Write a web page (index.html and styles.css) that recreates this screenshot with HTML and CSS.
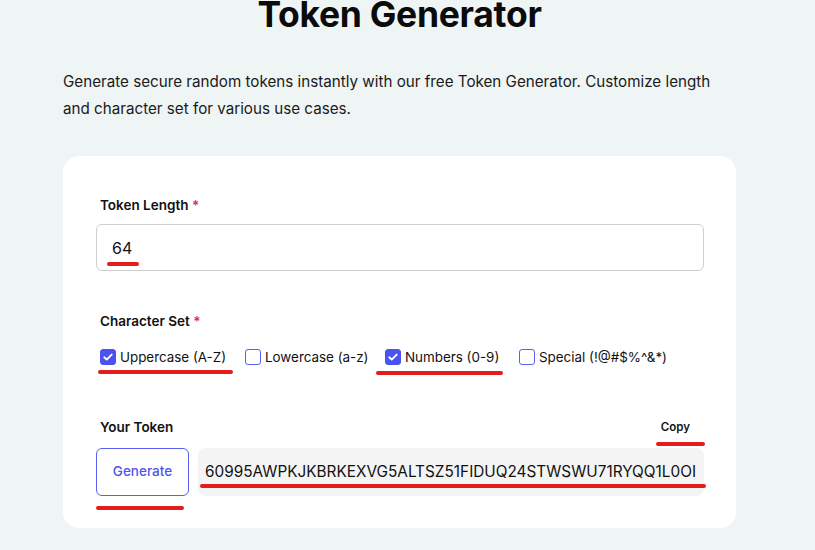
FILE: index.html
```html
<!DOCTYPE html>
<html lang="en">
<head>
<meta charset="utf-8">
<title>Token Generator</title>
<link rel="stylesheet" href="styles.css">
</head>
<body>
<main class="page">
  <h1 class="title">Token Generator</h1>
  <p class="intro">Generate secure random tokens instantly with our free Token Generator. Customize length and character set for various use cases.</p>
  <section class="card">
    <div class="field">
      <label class="label">Token Length <span class="req">*</span></label>
      <div class="input">64</div>
    </div>
    <div class="field field-gap">
      <label class="label">Character Set <span class="req">*</span></label>
      <div class="checks">
        <span class="check"><span class="box on"><svg viewBox="0 0 16 16" width="16" height="16"><path d="M4.3 8.3l2.4 2.3 5-5" fill="none" stroke="#fff" stroke-width="1.9" stroke-linecap="round" stroke-linejoin="round"/></svg></span>Uppercase (A-Z)</span>
        <span class="check"><span class="box"></span>Lowercase (a-z)</span>
        <span class="check"><span class="box on"><svg viewBox="0 0 16 16" width="16" height="16"><path d="M4.3 8.3l2.4 2.3 5-5" fill="none" stroke="#fff" stroke-width="1.9" stroke-linecap="round" stroke-linejoin="round"/></svg></span>Numbers (0-9)</span>
        <span class="check"><span class="box"></span>Special (!@#$%^&amp;*)</span>
      </div>
    </div>
    <div class="field token-field">
      <div class="token-head">
        <label class="label">Your Token</label>
        <span class="copy">Copy</span>
      </div>
      <div class="token-row">
        <button class="gen">Generate</button>
        <div class="token">60995AWPKJKBRKEXVG5ALTSZ51FIDUQ24STWSWU71RYQQ1L0OI</div>
      </div>
    </div>
    <span class="mark m-len"></span>
    <span class="mark m-upper"></span>
    <span class="mark m-num"></span>
    <span class="mark m-copy"></span>
    <span class="mark m-token"></span>
    <span class="mark m-gen"></span>
  </section>
</main>
</body>
</html>
```
FILE: styles.css
```css
* { box-sizing: border-box; }
html, body { margin: 0; padding: 0; }
body {
  background: #eff5f5;
  font-family: Inter, "Noto Sans", sans-serif;
  color: #111;
  height: 550px;
  overflow: hidden;
}
.page {
  width: 673px;
  margin-left: 63px;
}
.title {
  margin: 0;
  font-size: 35.5px;
  line-height: 30px;
  font-weight: 700;
  text-align: center;
  letter-spacing: -0.3px;
  color: #0b0b0b;
}
.intro {
  margin: 38px 0 0;
  font-size: 15.2px;
  line-height: 27px;
  color: #1a1a1a;
}
.card {
  position: relative;
  margin-top: 34px;
  background: #fff;
  border-radius: 16px;
  padding: 39px 32px 32px 33px;
}
.label {
  display: block;
  padding-left: 4px;
  font-size: 13.5px;
  line-height: 20px;
  font-weight: 600;
  color: #111;
}
.req { color: #e0245e; }
.input {
  margin-top: 9px;
  height: 47px;
  border: 1px solid #cfcfcf;
  border-radius: 6px;
  padding: 0 15px;
  display: flex;
  align-items: center;
  font-size: 16px;
  color: #111;
}
.field-gap { margin-top: 40px; }
.checks {
  margin-top: 16px;
  display: flex;
  gap: 0;
  padding-left: 4px;
  height: 20px;
  align-items: center;
  font-size: 13.4px;
  color: #111;
}
.check {
  display: inline-flex;
  align-items: center;
  gap: 4px;
}
.check:nth-child(1) { width: 145px; }
.check:nth-child(2) { width: 140px; }
.check:nth-child(3) { width: 134px; }
.box {
  width: 16px;
  height: 16px;
  border: 1px solid #5a5ff2;
  border-radius: 3px;
  background: #fff;
  display: inline-flex;
}
.box.on {
  background: #4a52f0;
  border-color: #4a52f0;
}
.box svg { margin: -1px; }
.token-field { margin-top: 50px; }
.token-head {
  display: flex;
  justify-content: space-between;
  align-items: center;
}
.copy {
  font-size: 11.5px;
  font-weight: 600;
  padding-right: 14px;
  color: #111;
}
.token-row {
  margin-top: 11px;
  display: flex;
  gap: 9px;
}
.gen {
  width: 93px;
  height: 48px;
  border: 1px solid #5a5ff2;
  border-radius: 6px;
  background: #fff;
  color: #4f55ee;
  font-family: Inter, "Noto Sans", sans-serif;
  font-size: 13.5px;
  font-weight: 500;
  padding: 0 0 2px;
}
.token {
  flex: 1;
  height: 48px;
  background: #f4f4f4;
  border-radius: 8px;
  display: flex;
  align-items: center;
  padding-left: 7px;
  padding-bottom: 1px;
  font-size: 15.35px;
  color: #111;
  white-space: nowrap;
  overflow: hidden;
}
.mark {
  position: absolute;
  height: 4px;
  background: #e31d1d;
  border-radius: 2px;
}
.m-len { left: 44px; top: 106px; width: 32px; }
.m-upper { left: 35px; top: 214px; width: 135px; }
.m-num { left: 313px; top: 215px; width: 127px; }
.m-copy { left: 593px; top: 286px; width: 49px; }
.m-token { left: 137px; top: 328px; width: 506px; }
.m-gen { left: 33px; top: 350px; width: 88px; }
```
